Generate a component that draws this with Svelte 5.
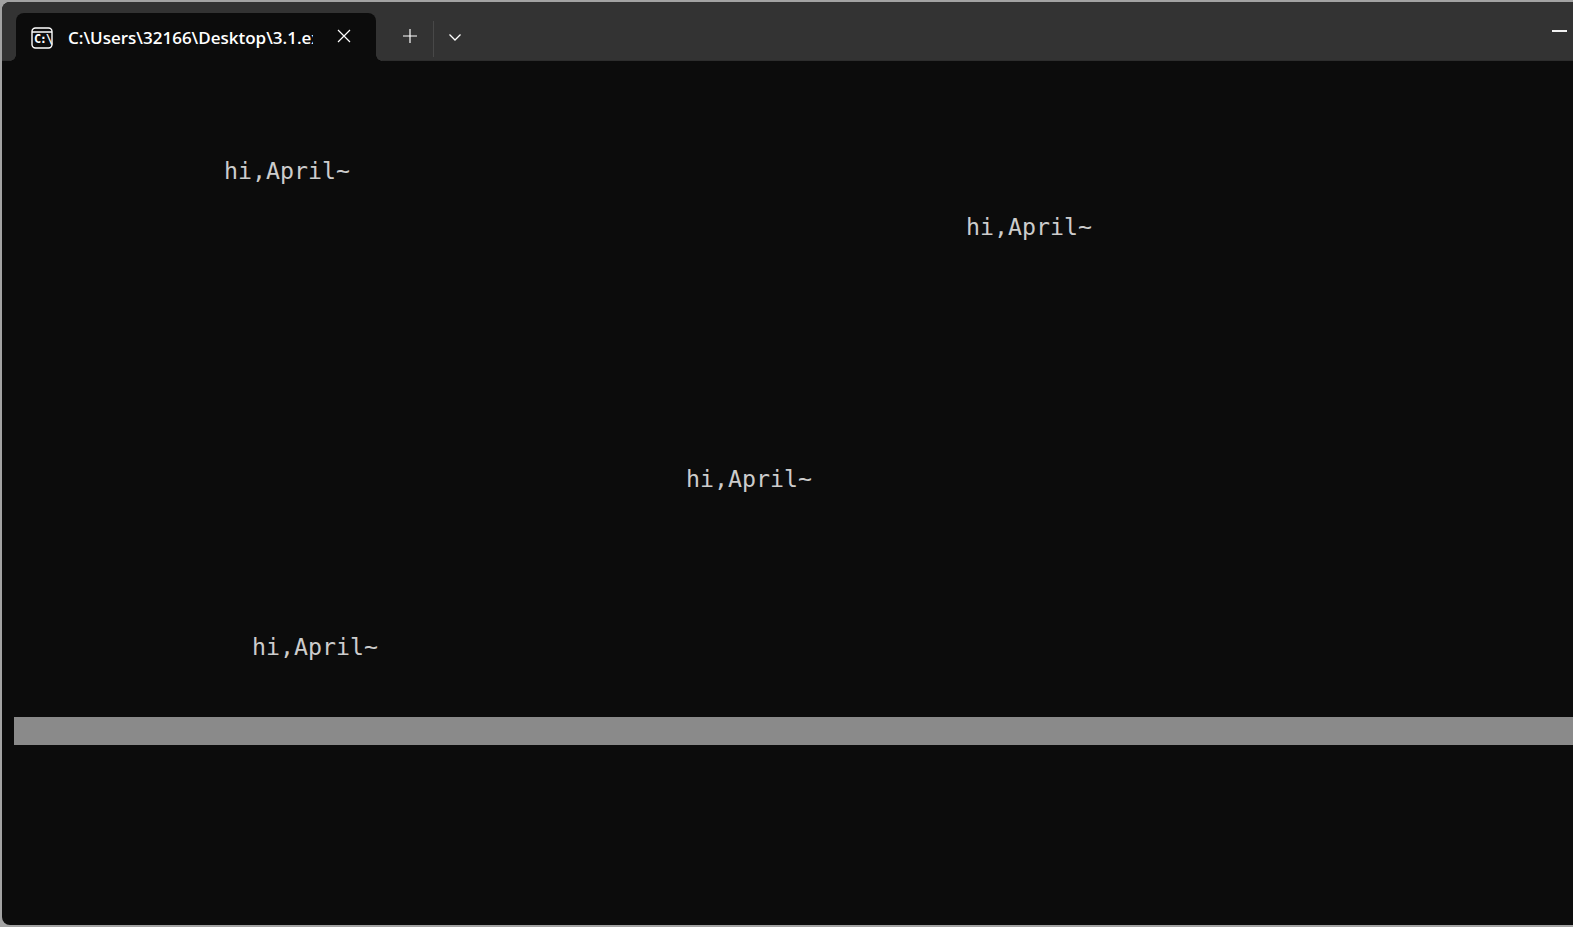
<script>
  const greetings = [
    { row: 4, col: 16 },
    { row: 6, col: 69 },
    { row: 15, col: 49 },
    { row: 21, col: 18 }
  ];
</script>

<div class="desktop">
  <div class="window">
    <header class="titlebar">
      <div class="tab">
        <svg class="tab-icon" width="22" height="22" viewBox="0 0 22 22" fill="none" aria-hidden="true">
          <rect x="1" y="1" width="20" height="20" rx="3.5" stroke="#fff" stroke-width="1.4" />
          <path d="M1 5H21" stroke="#fff" stroke-width="1.4" />
        </svg>
        <span class="tab-icon-text">C:\</span>
        <span class="tab-title">C:\Users\32166\Desktop\3.1.exe</span>
        <button class="tab-close" aria-label="Close tab">
          <svg width="14" height="14" viewBox="0 0 14 14" fill="none">
            <path d="M1 1L13 13M13 1L1 13" stroke="#fff" stroke-width="1.2" />
          </svg>
        </button>
      </div>
      <button class="new-tab" aria-label="New tab">
        <svg width="16" height="16" viewBox="0 0 16 16" fill="none">
          <path d="M8 1V15M1 8H15" stroke="#fff" stroke-width="1.2" />
        </svg>
      </button>
      <span class="divider"></span>
      <button class="tab-menu" aria-label="Open menu">
        <svg width="14" height="14" viewBox="0 0 14 14" fill="none">
          <path d="M1.5 4.5L7 10L12.5 4.5" stroke="#fff" stroke-width="1.3" />
        </svg>
      </button>
      <span class="spacer"></span>
      <span class="minimize"></span>
    </header>
    <main class="terminal">
      {#each greetings as g}
        <span class="line" style="grid-row: {g.row}; grid-column: {g.col} / span 9">hi,April~</span>
      {/each}
      <div class="selection"></div>
    </main>
  </div>
</div>

<style>
  :global(body) {
    margin: 0;
    background: #a3a3a3;
    overflow: hidden;
  }
  .desktop {
    width: 1573px;
    height: 927px;
    padding: 2px 0 2px 2px;
    box-sizing: border-box;
    overflow: hidden;
  }
  .window {
    display: flex;
    flex-direction: column;
    height: 100%;
    border-radius: 8px 0 0 8px;
    overflow: hidden;
    background: #0c0c0c;
  }
  .titlebar {
    display: flex;
    align-items: flex-start;
    flex: none;
    height: 59px;
    padding: 11px 0 0 14px;
    box-sizing: border-box;
    background: #333333;
    box-shadow: inset 0 -1px 0 #2e2e2e;
    font-family: "Open Sans", "Noto Sans", sans-serif;
  }
  .tab {
    position: relative;
    display: flex;
    align-items: center;
    flex: none;
    width: 360px;
    height: 48px;
    box-sizing: border-box;
    padding: 2px 0 0 15px;
    background: #0c0c0c;
    border-radius: 8px 8px 0 0;
    color: #fff;
  }
  .tab::before,
  .tab::after {
    content: "";
    position: absolute;
    bottom: 0;
    width: 6px;
    height: 6px;
  }
  .tab::before {
    left: -6px;
    background: radial-gradient(circle at 0 0, #333333 5.5px, #0c0c0c 6px);
  }
  .tab::after {
    right: -6px;
    background: radial-gradient(circle at 100% 0, #333333 5.5px, #0c0c0c 6px);
  }
  .tab-icon {
    flex: none;
  }
  .tab-icon-text {
    position: absolute;
    left: 18px;
    top: 19px;
    font: bold 12px/15px "DejaVu Sans Mono", monospace;
    letter-spacing: -1.4px;
    color: #fff;
  }
  .tab-title {
    flex: none;
    width: 245px;
    margin-left: 15px;
    overflow: hidden;
    white-space: nowrap;
    font-size: 17px;
    line-height: 22px;
    font-weight: 600;
    color: #fff;
  }
  .tab-close {
    flex: none;
    display: flex;
    margin: 0 0 4px 24px;
    padding: 0;
    border: 0;
    background: none;
  }
  .new-tab {
    display: flex;
    flex: none;
    margin: 15px 0 0 26px;
    padding: 0;
    border: 0;
    background: none;
  }
  .divider {
    flex: none;
    width: 1px;
    height: 36px;
    margin: 8px 0 0 15px;
    background: #484848;
  }
  .tab-menu {
    display: flex;
    flex: none;
    margin: 17px 0 0 14px;
    padding: 0;
    border: 0;
    background: none;
  }
  .spacer {
    flex: 1;
  }
  .minimize {
    flex: none;
    width: 15px;
    height: 2px;
    margin: 17px 6px 0 0;
    background: #f2f2f2;
  }
  .terminal {
    flex: 1;
    display: grid;
    grid-template-columns: repeat(112, 14px);
    grid-template-rows: repeat(29, 28px);
    padding: 12px 0 0 12px;
    font-family: "DejaVu Sans Mono", monospace;
    font-size: 23.25px;
    line-height: 28px;
    color: #cccccc;
    overflow: hidden;
  }
  .line {
    white-space: pre;
  }
  .selection {
    grid-row: 24;
    grid-column: 1 / -1;
    background: #8a8a8a;
  }
</style>
